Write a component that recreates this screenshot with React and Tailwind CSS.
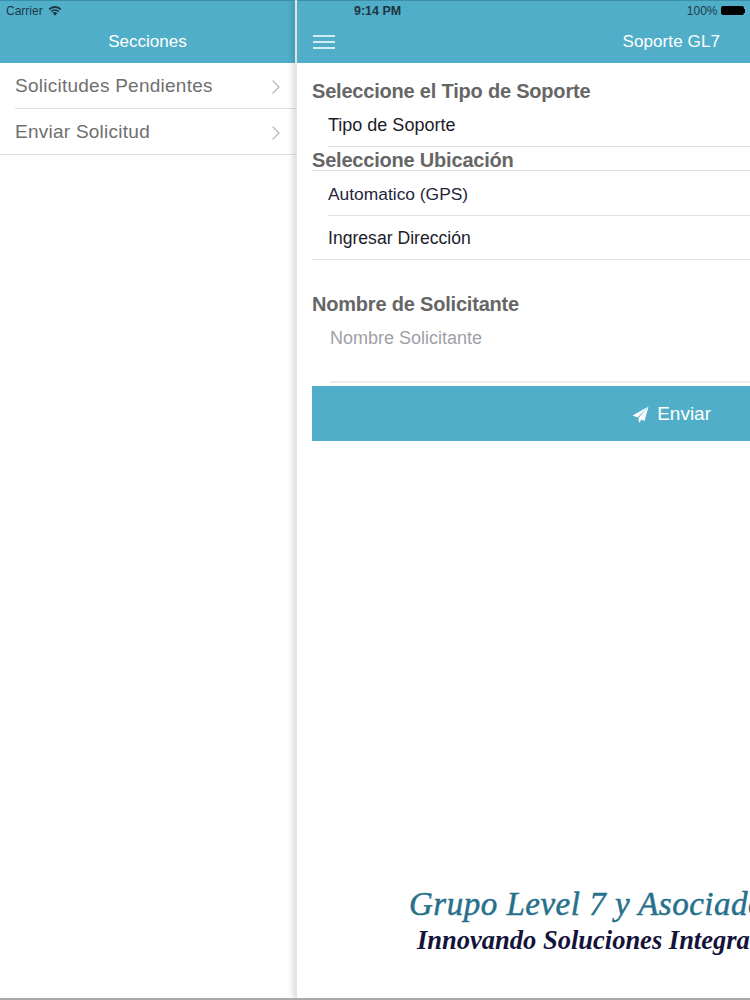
import React from "react";
import { ChevronRight } from "lucide-react";

const sections = ["Solicitudes Pendientes", "Enviar Solicitud"];

const Wifi = () => (
  <svg width="14" height="10" viewBox="0 0 14 10" fill="#1d3440">
    <path d="M7 9.8 4.7 7.1a3.2 3.2 0 0 1 4.600 0L7 9.800Z" />
    <path d="M3.900 6.300 2.800 5a6.200 6.200 0 0 1 8.400 0l-1.100 1.300a4.500 4.500 0 0 0-6.200 0Z" />
    <path d="M1.900 4 .6 2.700a9.200 9.200 0 0 1 12.800 0L12.100 4a7.400 7.400 0 0 0-10.200 0Z" />
  </svg>
);

const Battery = () => (
  <div className="flex items-center">
    <div className="w-[23px] h-[9px] rounded-[2px] bg-black" />
    <div className="w-[1.5px] h-[4px] bg-black" />
  </div>
);

const App = () => {
  return (
    <div className="relative w-[750px] h-[1000px] flex overflow-hidden bg-white font-['Liberation_Sans',Arial,sans-serif]">
      {/* Sidebar */}
      <aside className="w-[295px] h-[998px] shrink-0 flex flex-col">
        <header className="h-[63px] bg-[#50aec8] border-t border-[#3c8eaa]">
          <div className="h-[19px] pl-[6px] flex items-center gap-[5px] text-[12px] text-[#1f3a4a]">
            <span>Carrier</span>
            <Wifi />
          </div>
          <div className="h-[43px] flex items-center justify-center text-[17px] text-white">
            Secciones
          </div>
        </header>
        <div className="pl-[15px]">
          {sections.map((s, i) => (
            <div
              key={s}
              className={`h-[46px] pt-[2px] flex items-center justify-between pr-[7px] text-[19px] tracking-[0.25px] text-[#6f6f6f] border-b border-[#dfdfdf] ${
                i === sections.length - 1 ? "-ml-[15px] pl-[15px]" : ""
              }`}
            >
              {s}
              <ChevronRight size={24} strokeWidth={1.2} className="text-[#b5b5ba]" />
            </div>
          ))}
        </div>
      </aside>

      {/* Main panel */}
      <main className="flex-1 min-w-0 h-[998px] flex flex-col border-l-2 border-[#e2e2e6] shadow-[-3px_0_5px_rgba(0,0,0,0.12)]">
        <header className="h-[63px] bg-[#50aec8] border-t border-[#3c8eaa]">
          <div className="relative h-[19px] flex items-center justify-end gap-[3px] pr-[5px] text-[12px] text-[#1f3a4a]">
            <span className="absolute left-[57px] top-[1px] text-[12.5px] font-bold text-[#1d3440]">9:14 PM</span>
            <span className="pl-[1px]">100%</span>
            <Battery />
          </div>
          <div className="h-[43px] flex items-center justify-between pl-[16px] pr-[30px] text-white">
            <svg width="22" height="14" viewBox="0 0 22 14" stroke="#ffffff" strokeWidth="1.3">
              <path d="M0 1h22M0 7h22M0 13h22" />
            </svg>
            <span className="text-[17px] tracking-[0.1px]">Soporte GL7</span>
          </div>
        </header>

        <div className="pl-[15px] flex flex-col flex-1">
          <h2 className="mt-[16px] h-[24px] leading-[24px] text-[20px] font-bold text-[#666666] tracking-[-0.2px]">
            Seleccione el Tipo de Soporte
          </h2>
          <div className="ml-[16px] h-[44px] pt-[2px] flex items-center text-[18px] text-[#1c1c2b] border-b border-[#dfdfdf]">
            Tipo de Soporte
          </div>

          <h2 className="h-[24px] leading-[26px] text-[20px] font-bold text-[#666666] tracking-[-0.2px] border-b border-[#dfdfdf]">
            Seleccione Ubicación
          </h2>
          <div className="ml-[16px] h-[45px] pt-[2px] flex items-center text-[17.4px] text-[#25253a] border-b border-[#e3e3e3]">
            Automatico (GPS)
          </div>
          <div className="h-[44px] pt-[2px] pl-[16px] flex items-center text-[17.6px] text-[#1c1c2b] border-b border-[#e3e3e3]">
            Ingresar Dirección
          </div>

          <h2 className="mt-[32px] h-[24px] leading-[24px] text-[20px] font-bold text-[#666666] tracking-[-0.2px]">
            Nombre de Solicitante
          </h2>
          <div className="ml-[18px] h-[67px] pt-[10px] text-[18px] leading-[24px] text-[#a0a0a6] border-b-2 border-[#ececec]">
            Nombre Solicitante
          </div>

          <button className="mt-[3px] h-[55px] pt-[1px] w-full shrink-0 bg-[#50aec8] flex items-center justify-end gap-[8px] pr-[39px] text-[19px] text-white">
            <svg width="17" height="17" viewBox="0 0 17 17" fill="#ffffff">
              <path d="M16.500.5.500 9.500l5 2L16.500.5Z" />
              <path d="M16.500.5 6.500 12l.5 5 2.500-3.500 3 1.500 4-14.500Z" />
            </svg>
            Enviar
          </button>

          {/* Logo */}
          <div className="mt-auto pb-[41px] pl-[97px] whitespace-nowrap font-['Liberation_Serif',serif] italic">
            <div className="h-[38px] leading-[38px] text-[33px] text-[#27708c] tracking-[0.5px] [-webkit-text-stroke:0.5px_#27708c]">
              Grupo Level 7 y Asociados
            </div>
            <div className="h-[34px] leading-[34px] pl-[8px] text-[26.5px] font-bold text-[#14143a]">
              Innovando Soluciones Integrales
            </div>
          </div>
        </div>
      </main>

      {/* Bottom edge */}
      <div className="absolute left-0 right-0 bottom-0 h-[2px] bg-[#a8a8a8]" />
    </div>
  );
};

export default App;
